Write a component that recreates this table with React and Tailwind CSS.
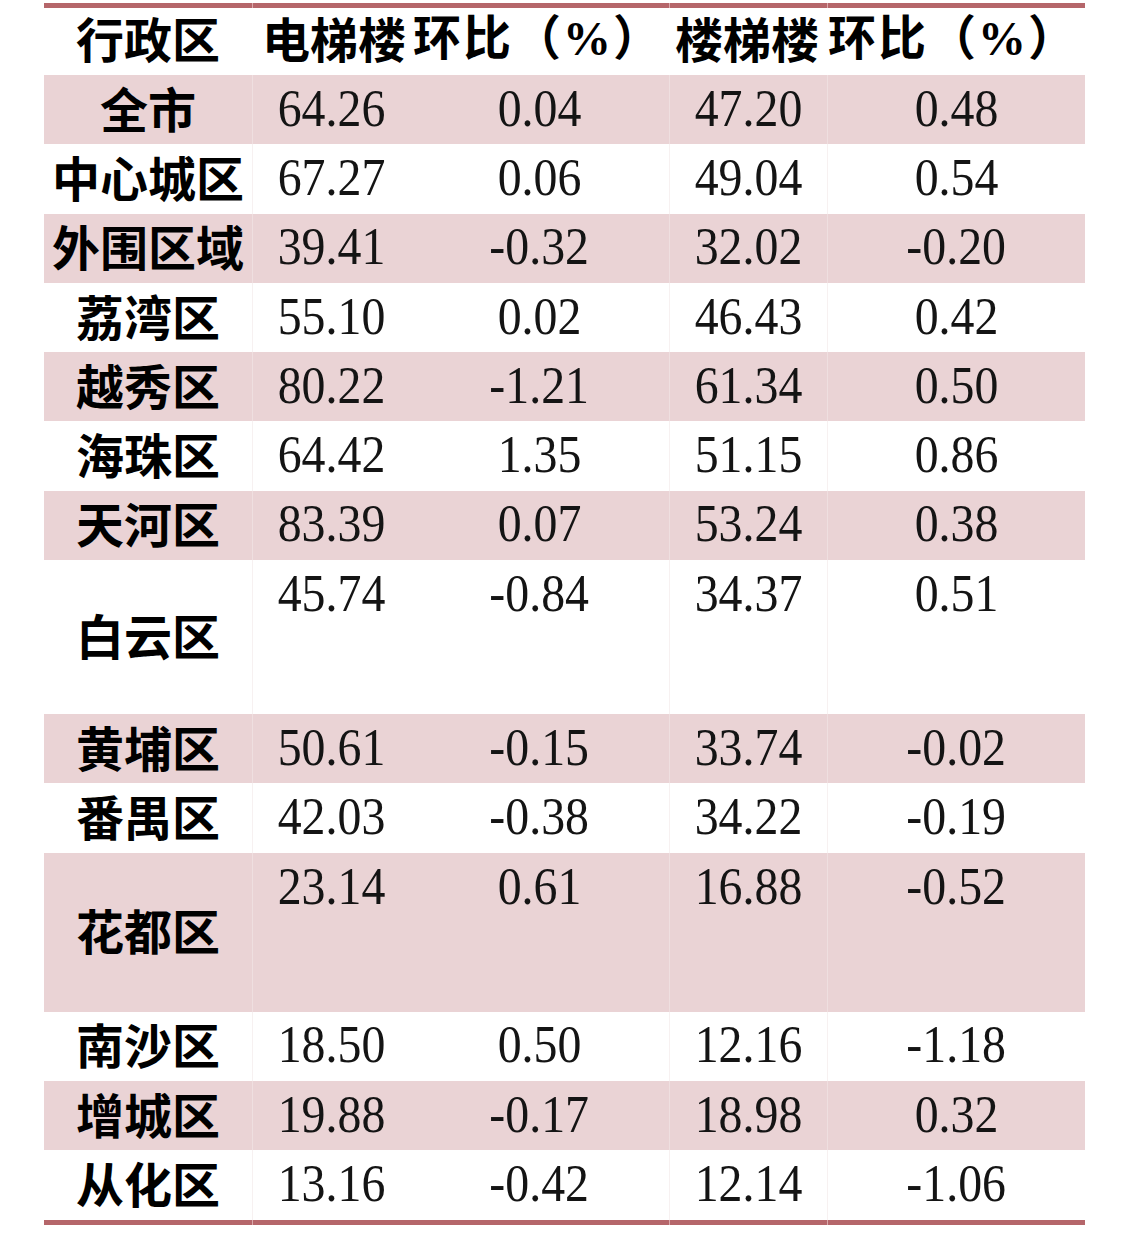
const CJK = 'font-[family-name:Noto_Sans_CJK_SC,sans-serif] font-bold'
const NUM = 'font-[family-name:Liberation_Serif,Times_New_Roman,serif]'

const COLS = 'grid grid-cols-[208px_158px_259px_158px_258px]'

const ROWS = [
  { name: '全市', v: ['64.26', '0.04', '47.20', '0.48'] },
  { name: '中心城区', v: ['67.27', '0.06', '49.04', '0.54'] },
  { name: '外围区域', v: ['39.41', '-0.32', '32.02', '-0.20'] },
  { name: '荔湾区', v: ['55.10', '0.02', '46.43', '0.42'] },
  { name: '越秀区', v: ['80.22', '-1.21', '61.34', '0.50'] },
  { name: '海珠区', v: ['64.42', '1.35', '51.15', '0.86'] },
  { name: '天河区', v: ['83.39', '0.07', '53.24', '0.38'] },
  { name: '白云区', v: ['45.74', '-0.84', '34.37', '0.51'], tall: 'h-[154px]' },
  { name: '黄埔区', v: ['50.61', '-0.15', '33.74', '-0.02'] },
  { name: '番禺区', v: ['42.03', '-0.38', '34.22', '-0.19'] },
  { name: '花都区', v: ['23.14', '0.61', '16.88', '-0.52'], tall: 'h-[159px]' },
  { name: '南沙区', v: ['18.50', '0.50', '12.16', '-1.18'] },
  { name: '增城区', v: ['19.88', '-0.17', '18.98', '0.32'] },
  { name: '从化区', v: ['13.16', '-0.42', '12.14', '-1.06'] },
]

// shaded rows alternate; the two tall rows keep the rhythm
const SHADED = [true, false, true, false, true, false, true, false, true, false, true, false, true, false]

// thick maroon rule with hairline breaks at the column joins
function Rule() {
  return (
    <div className={`${COLS} h-[5px]`}>
      <div className="bg-[#b5666a]" />
      <div className="col-span-2 border-l border-[#d9a9ab] bg-[#b5666a]" />
      <div className="border-l border-[#d9a9ab] bg-[#b5666a]" />
      <div className="border-l border-[#d9a9ab] bg-[#b5666a]" />
    </div>
  )
}

function Num({ children }) {
  return (
    <span className={`${NUM} inline-block origin-center scale-x-[0.92] text-[52px] leading-none text-[#141414]`}>
      {children}
    </span>
  )
}

function Row({ row, shaded }) {
  const tall = !!row.tall
  const line = shaded ? 'border-[#efdfe0]' : 'border-[#f7f1f1]'
  return (
    <div className={`${COLS} ${row.tall || 'h-[69.3px]'} ${shaded ? 'bg-[#ead3d5]' : 'bg-white'}`}>
      <div className="flex items-center justify-center pb-[6px]">
        <span className={`${CJK} text-[48px] leading-none text-black`}>{row.name}</span>
      </div>
      {row.v.map((val, i) => (
        <div
          key={i}
          className={`flex justify-center ${tall ? 'items-start pt-[8px]' : 'items-center pb-[2px]'} ${
            i === 0 || i === 2 || i === 3 ? `border-l ${line}` : ''
          }`}
        >
          <Num>{val}</Num>
        </div>
      ))}
    </div>
  )
}

export default function App() {
  return (
    <div className="min-h-[1233px] w-[1137px] overflow-hidden bg-white pt-[3px]">
      <div className="ml-[44px] w-[1041px]">
        <Rule />
        <div className={`${COLS} h-[67px] items-center pb-[10px] text-black`}>
          <div className={`${CJK} text-center text-[48px] leading-none`}>行政区</div>
          <div className={`${CJK} pl-[10px] text-[48px] leading-none`}>电梯楼</div>
          <div className={`${CJK} pl-[3px] text-[48px] leading-none tracking-[2px]`}>
            环比（<span className={`${NUM} font-bold`}>%</span>）
          </div>
          <div className={`${CJK} pl-[6px] text-[48px] leading-none`}>楼梯楼</div>
          <div className={`${CJK} pl-[1px] text-[48px] leading-none tracking-[2px]`}>
            环比（<span className={`${NUM} font-bold`}>%</span>）
          </div>
        </div>
        {ROWS.map((r, i) => (
          <Row key={r.name} row={r} shaded={SHADED[i]} />
        ))}
        <Rule />
      </div>
    </div>
  )
}
